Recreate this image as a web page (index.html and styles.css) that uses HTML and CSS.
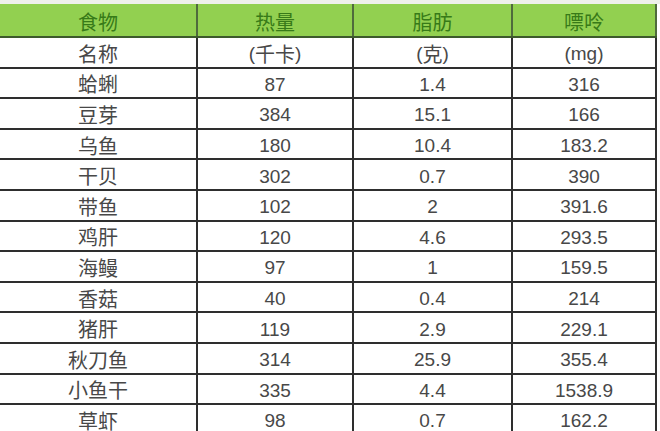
FILE: index.html
```html
<!DOCTYPE html>
<html>
<head>
<meta charset="utf-8">
<link rel="stylesheet" href="styles.css">
</head>
<body>
<div class="page">
  <div class="table">
    <div class="row head">
      <div class="cell"><span class="zh">食物</span></div>
      <div class="cell"><span class="zh">热量</span></div>
      <div class="cell"><span class="zh">脂肪</span></div>
      <div class="cell"><span class="zh">嘌呤</span></div>
    </div>
    <div class="row"><div class="cell"><span class="zh">名称</span></div><div class="cell">(<span class="zh">千卡</span>)</div><div class="cell">(<span class="zh">克</span>)</div><div class="cell">(mg)</div></div>
    <div class="row"><div class="cell"><span class="zh">蛤蜊</span></div><div class="cell">87</div><div class="cell">1.4</div><div class="cell">316</div></div>
    <div class="row"><div class="cell"><span class="zh">豆芽</span></div><div class="cell">384</div><div class="cell">15.1</div><div class="cell">166</div></div>
    <div class="row"><div class="cell"><span class="zh">乌鱼</span></div><div class="cell">180</div><div class="cell">10.4</div><div class="cell">183.2</div></div>
    <div class="row"><div class="cell"><span class="zh">干贝</span></div><div class="cell">302</div><div class="cell">0.7</div><div class="cell">390</div></div>
    <div class="row"><div class="cell"><span class="zh">带鱼</span></div><div class="cell">102</div><div class="cell">2</div><div class="cell">391.6</div></div>
    <div class="row"><div class="cell"><span class="zh">鸡肝</span></div><div class="cell">120</div><div class="cell">4.6</div><div class="cell">293.5</div></div>
    <div class="row"><div class="cell"><span class="zh">海鳗</span></div><div class="cell">97</div><div class="cell">1</div><div class="cell">159.5</div></div>
    <div class="row"><div class="cell"><span class="zh">香菇</span></div><div class="cell">40</div><div class="cell">0.4</div><div class="cell">214</div></div>
    <div class="row"><div class="cell"><span class="zh">猪肝</span></div><div class="cell">119</div><div class="cell">2.9</div><div class="cell">229.1</div></div>
    <div class="row"><div class="cell"><span class="zh">秋刀鱼</span></div><div class="cell">314</div><div class="cell">25.9</div><div class="cell">355.4</div></div>
    <div class="row"><div class="cell"><span class="zh">小鱼干</span></div><div class="cell">335</div><div class="cell">4.4</div><div class="cell">1538.9</div></div>
    <div class="row"><div class="cell"><span class="zh">草虾</span></div><div class="cell">98</div><div class="cell">0.7</div><div class="cell">162.2</div></div>
  </div>
</div>
</body>
</html>
```
FILE: styles.css
```css
html, body {
  margin: 0;
  padding: 0;
  background: #ffffff;
}
.page {
  width: 660px;
  height: 431px;
  overflow: hidden;
  padding-top: 4px;
  box-sizing: border-box;
  background: linear-gradient(#eef0ea, #eef0ea) top / 100% 4px no-repeat, #ffffff;
}
.table {
  width: 657px;
  display: flex;
  flex-direction: column;
  font-family: "Liberation Sans", "Noto Sans CJK SC", sans-serif;
  font-size: 19px;
  color: #484848;
}
.row {
  display: grid;
  grid-template-columns: 198px 156px 159px 144px;
  height: 30.6px;
  box-sizing: border-box;
  border-bottom: 2px solid #2e2e2e;
  flex: none;
}
.row.head {
  height: 34px;
  background: #92d050;
  color: #377a18;
  border-bottom-color: #3d5a2c;
}
.cell {
  display: flex;
  align-items: center;
  justify-content: center;
  border-right: 2px solid #2e2e2e;
  line-height: 1;
  padding-top: 3px;
  box-sizing: border-box;
}
.head .cell {
  border-right-color: #4f6b3c;
}
.zh {
  font-family: "Noto Sans CJK SC", sans-serif;
  font-size: 20px;
  line-height: 1;
}
```
